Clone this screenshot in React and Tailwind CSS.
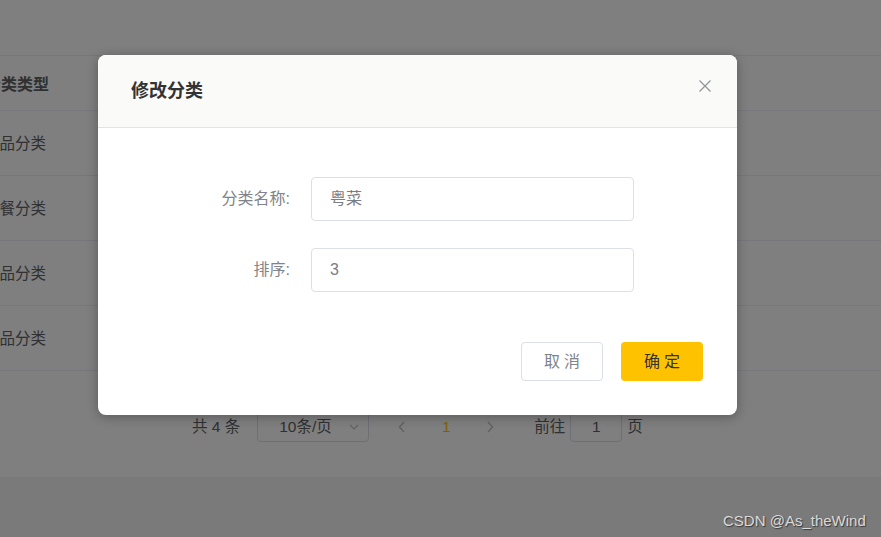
import React from "react";

const rows = ["菜品分类", "套餐分类", "菜品分类", "菜品分类"];

function CategoryTable() {
  // only the left edge of the table shows behind the dialog
  return (
    <div className="border-t border-[#ebeef5]">
      <div className="h-[55px] flex items-center border-b border-[#ebeef5]">
        <span className="-ml-[15px] pt-[4px] text-[16px] font-bold text-[#606266]">分类类型</span>
      </div>
      {rows.map((name, i) => (
        <div key={i} className="h-[65px] flex items-center border-b border-[#ebeef5]">
          <span className="-ml-[16px] pt-[2px] text-[15.5px] text-[#606266]">{name}</span>
        </div>
      ))}
    </div>
  );
}

function Pagination() {
  return (
    <div className="flex items-center h-[30px] pl-[192px] text-[15.5px] text-[#606266]">
      <span className="mr-[17px]">共 4 条</span>
      <div className="w-[112px] h-[30px] border border-[#dcdfe6] rounded-[4px] flex items-center justify-between pl-[21px] pr-[8px]">
        <span>10条/页</span>
        <svg width="12" height="12" viewBox="0 0 12 12" fill="none" stroke="#c0c4cc" strokeWidth="1.2">
          <path d="M2 4l4 4 4-4" />
        </svg>
      </div>
      <div className="ml-[11px] flex items-center">
        <div className="w-[44px] flex items-center justify-center">
          <svg width="10" height="12" viewBox="0 0 10 12" fill="none" stroke="#c0c4cc" strokeWidth="1.5">
            <path d="M7 1L2.5 6 7 11" />
          </svg>
        </div>
        <div className="w-[44px] text-center text-[#ffc200]">1</div>
        <div className="w-[44px] flex items-center justify-center">
          <svg width="10" height="12" viewBox="0 0 10 12" fill="none" stroke="#c0c4cc" strokeWidth="1.5">
            <path d="M3 1l4.5 5L3 11" />
          </svg>
        </div>
      </div>
      <span className="ml-[22px] mr-[5px]">前往</span>
      <div className="w-[52px] h-[30px] border border-[#dcdfe6] rounded-[4px] flex items-center justify-center">1</div>
      <span className="ml-[5px]">页</span>
    </div>
  );
}

function EditDialog() {
  return (
    <div className="absolute left-[98px] top-[55px] w-[639px] bg-white rounded-[8px] overflow-hidden shadow-[0_2px_12px_rgba(0,0,0,0.3)]">
      {/* header */}
      <div className="relative h-[73px] bg-stone-50 border-b border-[#e4e4e4] flex items-center pl-[33px]">
        <h2 className="text-[18px] font-bold text-[#333]">修改分类</h2>
        <svg className="absolute right-[26px] top-[25px]" width="12" height="12" viewBox="0 0 12 12" stroke="#909399" strokeWidth="1.2">
          <path d="M0.5 0.5l11 11M11.5 0.5l-11 11" />
        </svg>
      </div>

      {/* form */}
      <div className="pt-[49px] flex flex-col gap-[27px]">
        <div className="flex items-center">
          <label className="w-[213px] pr-[21px] text-right text-[16px] text-[#80838a]">分类名称:</label>
          <div className="w-[323px] h-[44px] border border-[#dcdfe6] rounded-[4px] flex items-center pl-[18px] text-[16px] text-[#7a7d84]">
            粤菜
          </div>
        </div>
        <div className="flex items-center">
          <label className="w-[213px] pr-[21px] text-right text-[16px] text-[#80838a]">排序:</label>
          <div className="w-[323px] h-[44px] border border-[#dcdfe6] rounded-[4px] flex items-center pl-[18px] text-[16px] text-[#7a7d84]">
            3
          </div>
        </div>
      </div>

      {/* footer */}
      <div className="flex justify-end gap-[18px] pt-[50px] pb-[34px] pr-[34px]">
        <button className="w-[82px] h-[39px] border border-[#dcdfe6] rounded-[4px] bg-white text-[16px] text-[#80838a] tracking-[4px] pl-[4px]">
          取消
        </button>
        <button className="w-[82px] h-[39px] rounded-[4px] bg-[#ffc200] text-[16px] text-[#333] tracking-[4px] pl-[4px]">
          确定
        </button>
      </div>
    </div>
  );
}

export default function App() {
  return (
    <div className="relative w-full h-[537px] overflow-hidden bg-[#f4f4f4] font-['Liberation_Sans','Noto_Sans_CJK_SC',sans-serif]">
      <div className="h-[477px] bg-white pt-[55px] flex flex-col">
        <CategoryTable />
        <div className="mt-[41px]">
          <Pagination />
        </div>
      </div>

      {/* modal mask */}
      <div className="absolute inset-0 bg-black/50" />
      <EditDialog />

      <div className="absolute left-[723px] top-[510px] text-[15px] text-[#dadada] font-['Liberation_Sans',sans-serif] [text-shadow:1px_1px_1px_rgba(0,0,0,0.55)]">
        CSDN @As_theWind
      </div>
    </div>
  );
}
